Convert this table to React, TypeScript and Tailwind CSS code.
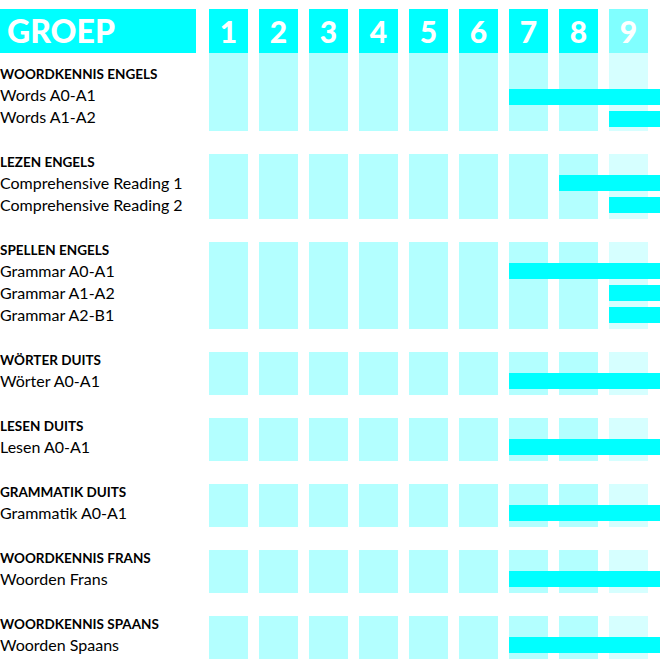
import React from 'react';

type Item = { label: string; start: number };
type Section = { title: string; items: Item[] };

const GROUPS = [1, 2, 3, 4, 5, 6, 7, 8, 9];

const sections: Section[] = [
  {
    title: 'WOORDKENNIS ENGELS',
    items: [
      { label: 'Words A0-A1', start: 7 },
      { label: 'Words A1-A2', start: 9 },
    ],
  },
  {
    title: 'LEZEN ENGELS',
    items: [
      { label: 'Comprehensive Reading 1', start: 8 },
      { label: 'Comprehensive Reading 2', start: 9 },
    ],
  },
  {
    title: 'SPELLEN ENGELS',
    items: [
      { label: 'Grammar A0-A1', start: 7 },
      { label: 'Grammar A1-A2', start: 9 },
      { label: 'Grammar A2-B1', start: 9 },
    ],
  },
  { title: 'WÖRTER DUITS', items: [{ label: 'Wörter A0-A1', start: 7 }] },
  { title: 'LESEN DUITS', items: [{ label: 'Lesen A0-A1', start: 7 }] },
  { title: 'GRAMMATIK DUITS', items: [{ label: 'Grammatik A0-A1', start: 7 }] },
  { title: 'WOORDKENNIS FRANS', items: [{ label: 'Woorden Frans', start: 7 }] },
  { title: 'WOORDKENNIS SPAANS', items: [{ label: 'Woorden Spaans', start: 7 }] },
];

const AREA_WIDTH = 451; // columns + overhang of the bars
const PITCH = 50;

const SectionRow: React.FC<{ section: Section; first: boolean }> = ({ section, first }) => {
  return (
    <div className={first ? 'flex' : 'flex mt-[23px]'}>
      {/* labels */}
      <div className={first ? 'w-[209px] pt-[13px]' : 'w-[209px]'}>
        <div className="h-[21px] text-[13.5px] leading-[16px] font-bold text-black">{section.title}</div>
        {section.items.map((it) => (
          <div key={it.label} className="h-[22px] text-[16px] leading-[16px] text-black whitespace-nowrap">
            {it.label}
          </div>
        ))}
      </div>

      {/* columns */}
      <div className="relative w-[451px] flex">
        <div className="flex gap-[11px]">
          {GROUPS.map((g) => (
            <div key={g} className={g === 9 ? 'w-[39px] bg-[#d6ffff]' : 'w-[39px] bg-[#b3ffff]'} />
          ))}
        </div>
        {/* bars over the columns */}
        <div className={first ? 'absolute inset-0 pt-[15px]' : 'absolute inset-0'}>
          <div className="h-[21px]" />
          {section.items.map((it) => (
            <div key={it.label} className="h-[22px]">
              <div
                className="h-[16px] bg-[#00ffff]"
                style={{
                  marginLeft: (it.start - 1) * PITCH,
                  width: AREA_WIDTH - (it.start - 1) * PITCH,
                }}
              />
            </div>
          ))}
        </div>
      </div>
    </div>
  );
};

const App: React.FC = () => {
  return (
    <div className="w-[671px] h-[668px] bg-white pt-[9px] font-['Lato','Liberation_Sans',sans-serif] overflow-hidden">
      <div className="flex h-[44px]">
        <div className="w-[196px] bg-[#00ffff] text-white font-black text-[32px] leading-none pl-[7px] flex items-center">
          GROEP
        </div>
        <div className="ml-[13px] flex gap-[11px]">
          {GROUPS.map((g) => (
            <div
              key={g}
              className={
                g === 9
                  ? 'w-[39px] bg-[#80ffff] text-white font-black text-[30px] leading-none flex items-center justify-center'
                  : 'w-[39px] bg-[#00ffff] text-white font-black text-[30px] leading-none flex items-center justify-center'
              }
            >
              {g}
            </div>
          ))}
        </div>
      </div>

      {sections.map((s, i) => (
        <SectionRow key={s.title} section={s} first={i === 0} />
      ))}
    </div>
  );
};

export default App;
